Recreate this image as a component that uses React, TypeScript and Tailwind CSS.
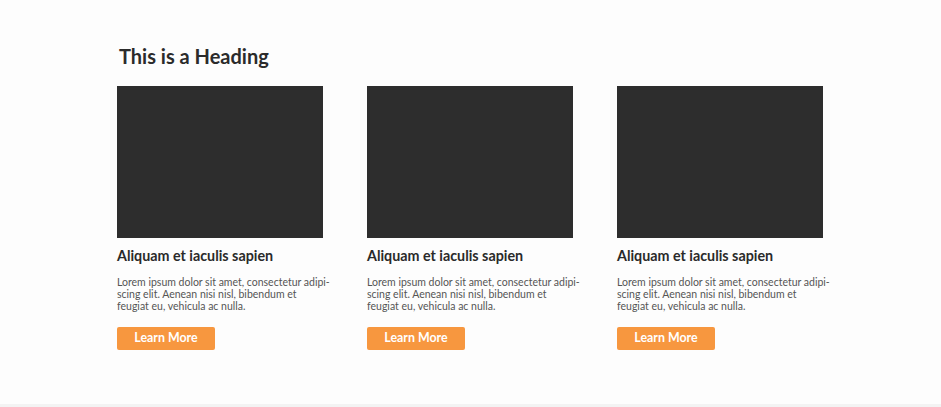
import React from "react";

const cards = [0, 1, 2];

const Card: React.FC = () => {
  return (
    <div className="w-[206px]">
      <div className="h-[152px] w-[206px] bg-[#2d2d2d]" />
      <div className="mt-[9px] text-[14.3px] font-bold leading-[18px] text-[#2a2a2a]">
        Aliquam et iaculis sapien
      </div>
      <p className="mt-[11px] w-[230px] text-[10.5px] leading-[12px] text-[#555555]">
        Lorem ipsum dolor sit amet, consectetur adipi-
        <br />
        scing elit. Aenean nisi nisl, bibendum et
        <br />
        feugiat eu, vehicula ac nulla.
      </p>
      <button className="mt-[15px] flex h-[23px] w-[98px] items-center justify-center rounded-[2px] bg-[#f7973f] text-[12.4px] font-bold text-white">
        Learn More
      </button>
    </div>
  );
};

export default function App() {
  return (
    <div className="flex h-[407px] w-[941px] flex-col bg-[#fdfdfd] font-['Lato',sans-serif]">
      <div className="flex-1 pl-[117px] pt-[43px]">
        <h1 className="ml-[2px] text-[20px] font-bold leading-[26px] text-[#2b2b2b]">This is a Heading</h1>
        <div className="mt-[17px] flex gap-[44px]">
          {cards.map((c) => (
            <Card key={c} />
          ))}
        </div>
      </div>
      <div className="h-[3px] bg-[#f3f3f3]" />
    </div>
  );
}
